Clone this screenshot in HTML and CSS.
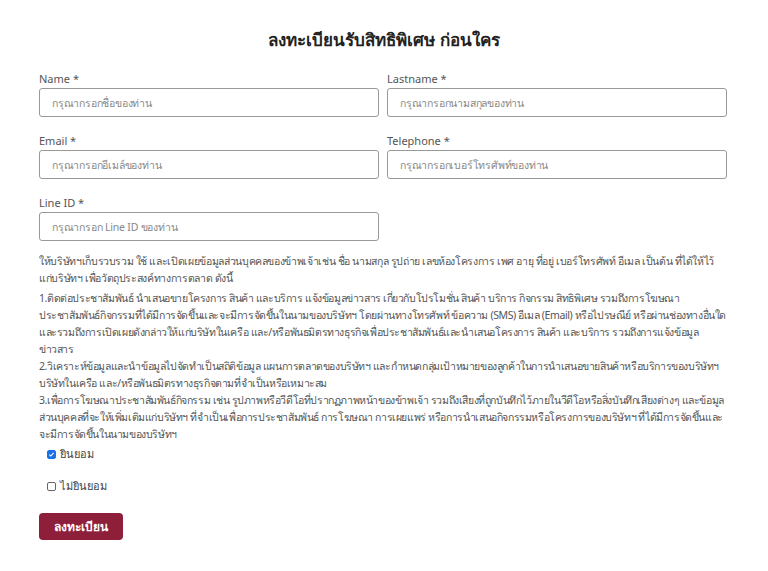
FILE: index.html
```html
<!DOCTYPE html>
<html lang="th">
<head>
    <meta charset="UTF-8">
    <meta name="viewport" content="width=device-width, initial-scale=1.0">
    <title>ลงทะเบียนรับสิทธิพิเศษ ก่อนใคร</title>
    <link rel="stylesheet" href="styles.css">
</head>
<body>
    <div class="register">
        <h1>ลงทะเบียนรับสิทธิพิเศษ ก่อนใคร</h1>
        <form>
            <div class="form-grid">
                <div class="field">
                    <label for="name">Name *</label>
                    <input type="text" id="name" placeholder="กรุณากรอกชื่อของท่าน">
                </div>
                <div class="field">
                    <label for="lastname">Lastname *</label>
                    <input type="text" id="lastname" placeholder="กรุณากรอกนามสกุลของท่าน">
                </div>
                <div class="field">
                    <label for="email">Email *</label>
                    <input type="email" id="email" placeholder="กรุณากรอกอีเมล์ของท่าน">
                </div>
                <div class="field">
                    <label for="tel">Telephone *</label>
                    <input type="tel" id="tel" placeholder="กรุณากรอกเบอร์โทรศัพท์ของท่าน">
                </div>
                <div class="field">
                    <label for="line">Line ID *</label>
                    <input type="text" id="line" placeholder="กรุณากรอก Line ID ของท่าน">
                </div>
            </div>

            <p class="consent intro">ให้บริษัทฯเก็บรวบรวม ใช้ และเปิดเผยข้อมูลส่วนบุคคลของข้าพเจ้าเช่น ชื่อ นามสกุล รูปถ่าย เลขห้องโครงการ เพศ อายุ ที่อยู่ เบอร์โทรศัพท์ อีเมล เป็นต้น ที่ได้ให้ไว้แก่บริษัทฯ เพื่อวัตถุประสงค์ทางการตลาด ดังนี้</p>

            <p class="consent list">1.ติดต่อประชาสัมพันธ์ นำเสนอขายโครงการ สินค้า และบริการ แจ้งข้อมูลข่าวสาร เกี่ยวกับโปรโมชั่น สินค้า บริการ กิจกรรม สิทธิพิเศษ รวมถึงการโฆษณาประชาสัมพันธ์กิจกรรมที่ได้มีการจัดขึ้นและจะมีการจัดขึ้นในนามของบริษัทฯ โดยผ่านทางโทรศัพท์ ข้อความ (SMS) อีเมล (Email) หรือไปรษณีย์ หรือผ่านช่องทางอื่น&#8288;ใด และรวมถึงการเปิดเผยดังกล่าวให้แก่บริษัทในเครือ และ/หรือพันธมิตรทางธุรกิจเพื่อประชาสัมพันธ์และนำเสนอโครงการ สินค้า และบริการ รวมถึงการแจ้งข้อมูลข่าวสาร<br>
            2.วิเคราะห์ข้อมูลและนำข้อมูลไปจัดทำเป็นสถิติข้อมูล แผนการตลาดของบริษัทฯ และกำหนดกลุ่มเป้าหมายของลูกค้าในการนำเสนอขายสินค้าหรือบริการของบริษัทฯ บริษัทในเครือ และ/หรือพันธมิตรทางธุรกิจตามที่จำเป็นหรือเหมาะสม<br>
            3.เพื่อการโฆษณาประชาสัมพันธ์กิจกรรม เช่น รูปภาพหรือวีดีโอที่ปรากฏภาพหน้าของข้าพเจ้า รวมถึงเสียงที่ถูกบันทึกไว้ภายในวีดีโอหรือสิ่งบันทึกเสียงต่างๆ และข้อมูลส่วนบุคคลที่จะให้เพิ่มเติมแก่บริษัทฯ ที่จำเป็นเพื่อการประชาสัมพันธ์ การโฆษณา การเผยแพร่ หรือการนำเสนอกิจกรรมหรือโครงการของบริษัทฯ ที่ได้มีการจัด&#8288;ขึ้นและจะมีการจัดขึ้นในนามของบริษัทฯ</p>

            <div class="choices">
                <label class="check"><input type="checkbox" class="box" checked> ยินยอม</label>
                <label class="check"><input type="checkbox" class="box"> ไม่ยินยอม</label>
            </div>

            <button type="submit" class="submit">ลงทะเบียน</button>
        </form>
    </div>
</body>
</html>
```

FILE: styles.css
```css
* {
    box-sizing: border-box;
}

body {
    margin: 0;
    background: #fff;
    color: #555;
    font-family: "Noto Sans", "Open Sans", sans-serif;
}

.register {
    width: 690px;
    margin: 0 auto;
    padding: 27px 0 20px;
}

h1 {
    margin: 0 0 18px;
    text-align: center;
    font-size: 17px;
    font-weight: 700;
    color: #222;
    line-height: 26px;
}

.form-grid {
    display: grid;
    grid-template-columns: 340px 340px;
    column-gap: 8px;
    row-gap: 16px;
}

.field label {
    display: block;
    font-size: 11px;
    line-height: 16px;
    margin-bottom: 1px;
    color: #555;
}

.field input {
    width: 100%;
    height: 29px;
    padding: 0 12px;
    border: 1px solid #999;
    border-radius: 3px;
    font-family: inherit;
    font-size: 10.5px;
    letter-spacing: -0.2px;
}

.field input::placeholder {
    color: #888;
}

.consent {
    margin: 12px 0 0;
    font-size: 10.5px;
    letter-spacing: -0.35px;
    line-height: 17px;
    color: #555;
}

.consent.intro {
    padding-right: 10px;
}

.consent.list {
    letter-spacing: -0.4px;
}

.consent + .consent {
    margin-top: 3px;
}

.choices {
    display: flex;
    flex-direction: column;
    gap: 10px;
    padding-left: 8px;
}

.check {
    display: flex;
    align-items: center;
    gap: 4px;
    height: 22px;
    font-size: 11px;
    color: #444;
}

.check .box {
    appearance: none;
    width: 9px;
    height: 9px;
    margin: 0;
    border: 1px solid #666;
    border-radius: 2px;
    background: #fff;
}

.check .box:checked {
    background: #1a73e8 url("data:image/svg+xml;utf8,<svg xmlns='http://www.w3.org/2000/svg' viewBox='0 0 10 10'><path d='M2 5.2l2 2 4-4.4' fill='none' stroke='white' stroke-width='1.6'/></svg>") center / 100% no-repeat;
    border-color: #1a73e8;
}

.submit {
    margin-top: 16px;
    background-color: #8e1f3b;
    color: #fff;
    border: none;
    border-radius: 4px;
    padding: 0 14px;
    height: 27px;
    width: 84px;
    font-family: inherit;
    font-size: 12px;
    font-weight: 700;
    cursor: pointer;
}
```
